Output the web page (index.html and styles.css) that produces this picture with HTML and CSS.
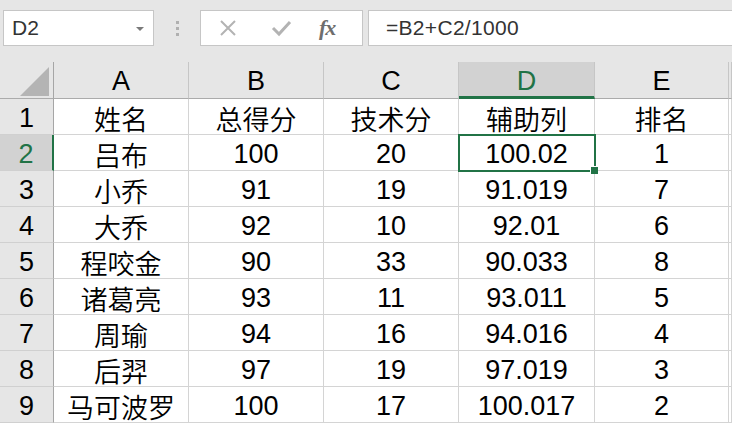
FILE: index.html
```html
<!DOCTYPE html>
<html lang="zh-CN">

<head>
  <meta charset="UTF-8">
  <title>Sheet1</title>
  <link rel="stylesheet" href="styles.css">
</head>

<body>
  <div class="bar">
    <div class="namebox">
      <span>D2</span>
      <svg class="caret" width="10" height="6" viewBox="0 0 10 6"><path d="M1 1h8L5 5z" fill="#7a7a7a"/></svg>
    </div>
    <div class="grip"><i></i><i></i><i></i></div>
    <div class="buttons">
      <svg width="20" height="20" viewBox="0 0 20 20"><path d="M3 3L17 17M17 3L3 17" stroke="#b3b3b3" stroke-width="2"/></svg>
      <svg width="22" height="20" viewBox="0 0 22 20"><path d="M3 10l6 6L20 4" stroke="#b3b3b3" stroke-width="3" fill="none"/></svg>
      <span class="fx">fx</span>
    </div>
    <div class="formula">=B2+C2/1000</div>
  </div>

  <div class="sheet">
    <div class="corner"><svg width="30" height="30" viewBox="0 0 30 30"><path d="M29 1V30H0z" fill="#b4b4b4"/></svg></div>
    <div class="colhead">A</div>
    <div class="colhead">B</div>
    <div class="colhead">C</div>
    <div class="colhead active">D</div>
    <div class="colhead">E</div>
    <div class="colhead"></div>

    <div class="rowhead">1</div>
    <div class="cell">姓名</div><div class="cell">总得分</div><div class="cell">技术分</div><div class="cell">辅助列</div><div class="cell">排名</div><div class="cell"></div>

    <div class="rowhead active">2</div>
    <div class="cell">吕布</div><div class="cell">100</div><div class="cell">20</div><div class="cell selected">100.02</div><div class="cell">1</div><div class="cell"></div>

    <div class="rowhead">3</div>
    <div class="cell">小乔</div><div class="cell">91</div><div class="cell">19</div><div class="cell">91.019</div><div class="cell">7</div><div class="cell"></div>

    <div class="rowhead">4</div>
    <div class="cell">大乔</div><div class="cell">92</div><div class="cell">10</div><div class="cell">92.01</div><div class="cell">6</div><div class="cell"></div>

    <div class="rowhead">5</div>
    <div class="cell">程咬金</div><div class="cell">90</div><div class="cell">33</div><div class="cell">90.033</div><div class="cell">8</div><div class="cell"></div>

    <div class="rowhead">6</div>
    <div class="cell">诸葛亮</div><div class="cell">93</div><div class="cell">11</div><div class="cell">93.011</div><div class="cell">5</div><div class="cell"></div>

    <div class="rowhead">7</div>
    <div class="cell">周瑜</div><div class="cell">94</div><div class="cell">16</div><div class="cell">94.016</div><div class="cell">4</div><div class="cell"></div>

    <div class="rowhead">8</div>
    <div class="cell">后羿</div><div class="cell">97</div><div class="cell">19</div><div class="cell">97.019</div><div class="cell">3</div><div class="cell"></div>

    <div class="rowhead">9</div>
    <div class="cell">马可波罗</div><div class="cell">100</div><div class="cell">17</div><div class="cell">100.017</div><div class="cell">2</div><div class="cell"></div>
  </div>
</body>

</html>
```

FILE: styles.css
```css
body {
  margin: 0;
  background: #fff;
  font-family: "Liberation Sans", "Noto Sans CJK SC", sans-serif;
  overflow: hidden;
}

.bar {
  background: #e6e6e6;
  height: 52px;
  padding: 10px 0 0 3px;
  display: flex;
  align-items: flex-start;
}

.namebox {
  width: 151px;
  height: 36px;
  box-sizing: border-box;
  background: #fff;
  border: 1px solid #c6c6c6;
  display: flex;
  align-items: center;
  justify-content: space-between;
  padding: 0 8px;
  font-size: 21px;
  color: #333;
}

.namebox .caret {
  margin-top: 2px;
}

.grip {
  width: 46px;
  height: 36px;
  display: flex;
  flex-direction: column;
  align-items: center;
  justify-content: center;
  gap: 3px;
}

.grip i {
  width: 3px;
  height: 3px;
  background: #b0b0b0;
}

.buttons {
  width: 163px;
  height: 36px;
  box-sizing: border-box;
  background: #fff;
  border: 1px solid #c6c6c6;
  display: flex;
  align-items: center;
  padding: 0 0 0 17px;
  gap: 34px;
}

.buttons svg:nth-child(2) {
  margin-left: -2px;
}

.fx {
  font-family: "Liberation Serif", serif;
  font-style: italic;
  font-weight: bold;
  font-size: 22px;
  color: #6e6e6e;
  margin-left: -7px;
  letter-spacing: -1px;
}

.formula {
  flex: 1;
  margin-left: 5px;
  height: 36px;
  box-sizing: border-box;
  background: #fff;
  border: 1px solid #c6c6c6;
  border-right: 0;
  padding: 5px 0 0 17px;
  font-size: 21px;
  letter-spacing: 0.3px;
  color: #333;
}

.sheet {
  display: grid;
  grid-template-columns: 54px 135px 135px 135px 136px 134px 1fr;
  grid-template-rows: 37px repeat(9, 36px);
  font-size: 27px;
  font-weight: 350;
  color: #000;
}

.sheet > div {
  box-sizing: border-box;
  display: flex;
  align-items: center;
  justify-content: center;
  padding-top: 3px;
}

.corner {
  background: #e6e6e6;
  border-right: 1px solid #a6a6a6;
  border-bottom: 1px solid #ababab;
  align-items: flex-end !important;
  justify-content: flex-end !important;
  padding: 0 3px 2px 0 !important;
}

.colhead {
  background: #e6e6e6;
  border-right: 1px solid #c6c6c6;
  border-bottom: 1px solid #ababab;
}

.colhead.active {
  background: #d2d2d2;
  color: #217346;
  border-bottom: 3px solid #217346;
  padding-top: 5px !important;
}

.rowhead {
  background: #e6e6e6;
  border-right: 1px solid #a6a6a6;
  border-bottom: 1px solid #d0d0d0;
}

.rowhead.active {
  background: #d2d2d2;
  color: #217346;
  border-right: 2px solid #217346;
}

.cell {
  border-right: 1px solid #d4d4d4;
  border-bottom: 1px solid #d4d4d4;
  white-space: nowrap;
}

.cell.selected {
  position: relative;
  outline: 2px solid #217346;
  outline-offset: -1px;
  z-index: 1;
}

.cell.selected::after {
  content: "";
  position: absolute;
  right: -4px;
  bottom: -4px;
  width: 7px;
  height: 7px;
  background: #217346;
  border: 1px solid #fff;
  border-width: 1px 0 0 1px;
}
```
